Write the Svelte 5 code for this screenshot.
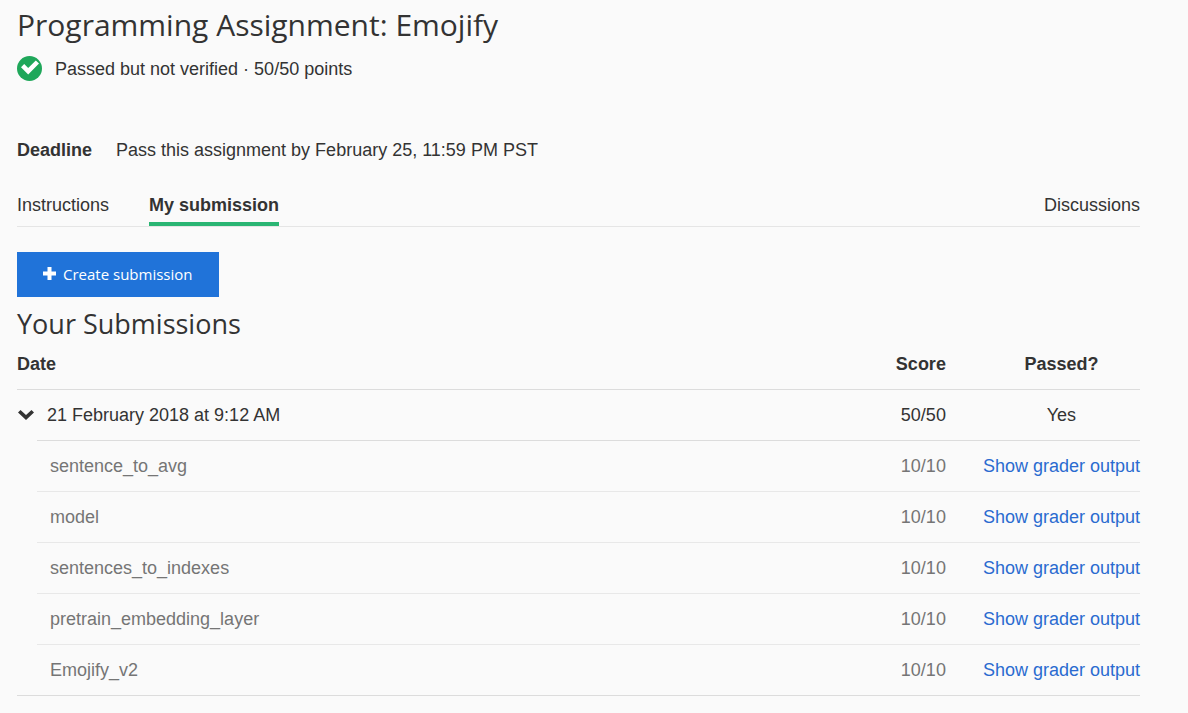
<script>
  const parts = ['sentence_to_avg', 'model', 'sentences_to_indexes', 'pretrain_embedding_layer', 'Emojify_v2'];
  let open = $state(true);
</script>

<main>
  <h1>Programming Assignment: Emojify</h1>
  <div class="status">
    <svg width="26" height="26" viewBox="0 0 26 26" aria-hidden="true">
      <circle cx="12.5" cy="12.5" r="12.5" fill="#1fa75a" />
      <path d="M4 11.2L7.2 8l4 4L18.8 4.4 22 7.6 11.2 18.4z" fill="#fff" />
    </svg>
    <span>Passed but not verified · 50/50 points</span>
  </div>
  <div class="deadline">
    <strong>Deadline</strong>
    <span>Pass this assignment by February 25, 11:59 PM PST</span>
  </div>
  <nav>
    <a href="#instructions">Instructions</a>
    <a href="#submission" class="active">My submission</a>
    <a href="#discussions" class="last">Discussions</a>
  </nav>
  <button class="create">
    <svg width="13" height="13" viewBox="0 0 13 13" aria-hidden="true"><path d="M4.5 0h4v4.5H13v4H8.500V13h-4V8.500H0v-4h4.500z" fill="#fff" /></svg>
    Create submission
  </button>
  <h2>Your Submissions</h2>
  <table>
    <thead>
      <tr><th colspan="2">Date</th><th class="score">Score</th><th class="result">Passed?</th></tr>
    </thead>
    <tbody>
      <tr class="attempt">
        <td class="gutter">
          <button class="toggle" aria-expanded={open} aria-label="Submission details" onclick={() => (open = !open)}>
            <svg width="18" height="12" viewBox="0 0 18 12" aria-hidden="true"><path d="M1 3.500L3.500 1 9 6 14.500 1 17 3.500 9 11z" fill="#333" /></svg>
          </button>
        </td>
        <td class="name">21 February 2018 at 9:12 AM</td>
        <td class="score">50/50</td>
        <td class="result">Yes</td>
      </tr>
      {#if open}
        {#each parts as part}
          <tr class="part">
            <td class="gutter"></td>
            <td class="name">{part}</td>
            <td class="score">10/10</td>
            <td class="result"><a href="#output">Show grader output</a></td>
          </tr>
        {/each}
      {/if}
    </tbody>
  </table>
</main>

<style>
  :global(body) { background: #fafafa; }
  main {
    padding: 5px 48px 15px 17px;
    color: #333;
    font: 18px/24px "Liberation Sans", Arial, sans-serif;
  }
  h1, h2 { margin: 0; font-family: "Open Sans", sans-serif; font-weight: 400; }
  h1 { font-size: 30px; line-height: 40px; }
  h2 { margin-top: 7px; font-size: 27px; line-height: 40px; }
  svg { display: block; flex: none; }
  .status { display: flex; align-items: center; gap: 12px; margin-top: 11px; }
  .deadline { display: flex; gap: 24px; margin-top: 56px; }
  nav { display: flex; gap: 40px; margin-top: 31px; border-bottom: 1px solid #e5e5e5; }
  nav a { padding-bottom: 9px; color: #333; text-decoration: none; }
  nav .active { padding-bottom: 5px; border-bottom: 4px solid #2ab573; font-weight: 700; }
  nav .last { margin-left: auto; }
  button { border: 0; font: inherit; color: inherit; cursor: pointer; }
  .create {
    display: flex; align-items: center; gap: 7px; height: 45px; margin-top: 25px; padding: 0 26px 2px;
    background: #2073d9; color: #fff; font: 15px/24px "Open Sans", sans-serif;
  }
  table { width: 100%; border-collapse: separate; border-spacing: 0; }
  th, td { padding: 0; text-align: left; font-weight: 400; border-bottom: 1px solid #dcdcdc; }
  th { height: 37px; padding-top: 8px; font-weight: 700; vertical-align: top; }
  td { height: 50px; }
  .score { width: 80px; text-align: right; }
  .result { width: 157px; padding-left: 37px; text-align: center; white-space: nowrap; }
  .gutter { width: 20px; }
  .attempt .name { padding-left: 10px; }
  .part { color: #757575; }
  .part .name { padding-left: 13px; }
  .part td { border-color: #e8e8e8; }
  tr:not(:last-child) .gutter { border-bottom-color: transparent; }
  .part:last-child td { border-color: #dcdcdc; }
  .toggle { display: block; padding: 0; background: none; }
  a { color: #2a6bd0; text-decoration: none; }
</style>
